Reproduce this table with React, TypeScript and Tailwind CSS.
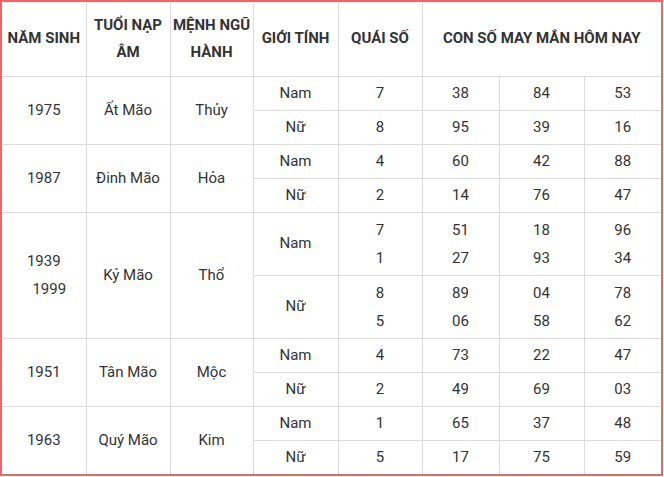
import React from 'react';

type Sub = { gender: string; quai: string[]; nums: string[][] };
type Group = { years: React.ReactNode; tuoi: string; menh: string; tall?: boolean; subs: Sub[] };

const groups: Group[] = [
  {
    years: '1975',
    tuoi: 'Ất Mão',
    menh: 'Thủy',
    subs: [
      { gender: 'Nam', quai: ['7'], nums: [['38', '84', '53']] },
      { gender: 'Nữ', quai: ['8'], nums: [['95', '39', '16']] },
    ],
  },
  {
    years: '1987',
    tuoi: 'Đinh Mão',
    menh: 'Hỏa',
    subs: [
      { gender: 'Nam', quai: ['4'], nums: [['60', '42', '88']] },
      { gender: 'Nữ', quai: ['2'], nums: [['14', '76', '47']] },
    ],
  },
  {
    years: (
      <>
        <div>1939</div>
        <div className="pl-[11px]">1999</div>
      </>
    ),
    tuoi: 'Kỷ Mão',
    menh: 'Thổ',
    tall: true,
    subs: [
      { gender: 'Nam', quai: ['7', '1'], nums: [['51', '18', '96'], ['27', '93', '34']] },
      { gender: 'Nữ', quai: ['8', '5'], nums: [['89', '04', '78'], ['06', '58', '62']] },
    ],
  },
  {
    years: '1951',
    tuoi: 'Tân Mão',
    menh: 'Mộc',
    subs: [
      { gender: 'Nam', quai: ['4'], nums: [['73', '22', '47']] },
      { gender: 'Nữ', quai: ['2'], nums: [['49', '69', '03']] },
    ],
  },
  {
    years: '1963',
    tuoi: 'Quý Mão',
    menh: 'Kim',
    subs: [
      { gender: 'Nam', quai: ['1'], nums: [['65', '37', '48']] },
      { gender: 'Nữ', quai: ['5'], nums: [['17', '75', '59']] },
    ],
  },
];

const td = 'border border-[#dcdcdc] text-center align-middle p-0';

function Lines({ items }: { items: string[] }) {
  return (
    <>
      {items.map((t, i) => (
        <div key={i} className="leading-[28px]">
          {t}
        </div>
      ))}
    </>
  );
}

export default function App() {
  return (
    <div className="bg-white w-[664px] h-[477px]">
      <div
        className="w-[663px] border-2 border-[#e26a6a] text-[#333] text-[15px]"
        style={{ fontFamily: 'Roboto, "Liberation Sans", sans-serif' }}
      >
        <table className="w-full table-fixed border-collapse border-hidden">
          <colgroup>
            <col className="w-[84px]" />
            <col className="w-[84px]" />
            <col className="w-[83px]" />
            <col className="w-[85px]" />
            <col className="w-[84px]" />
            <col className="w-[77px]" />
            <col className="w-[85px]" />
            <col className="w-[77px]" />
          </colgroup>
          <thead>
            <tr className="h-[74px] font-bold leading-[27px]">
              <th className={td}>NĂM SINH</th>
              <th className={td}>
                TUỔI NẠP
                <br />
                ÂM
              </th>
              <th className={td}>
                MỆNH NGŨ
                <br />
                HÀNH
              </th>
              <th className={td}>GIỚI TÍNH</th>
              <th className={td}>QUÁI SỐ</th>
              <th className={td} colSpan={3}>
                CON SỐ MAY MẮN HÔM NAY
              </th>
            </tr>
          </thead>
          <tbody>
            {groups.map((g, gi) =>
              g.subs.map((s, si) => (
                <tr key={`${gi}-${si}`} className={g.tall ? 'h-[63px]' : 'h-[34px]'}>
                  {si === 0 && (
                    <>
                      <td className={td} rowSpan={2}>
                        <div className="leading-[28px]">{g.years}</div>
                      </td>
                      <td className={td} rowSpan={2}>
                        {g.tuoi}
                      </td>
                      <td className={td} rowSpan={2}>
                        {g.menh}
                      </td>
                    </>
                  )}
                  <td className={td}>{s.gender}</td>
                  <td className={td}>
                    <Lines items={s.quai} />
                  </td>
                  {[0, 1, 2].map((c) => (
                    <td key={c} className={td}>
                      <Lines items={s.nums.map((r) => r[c])} />
                    </td>
                  ))}
                </tr>
              ))
            )}
          </tbody>
        </table>
      </div>
    </div>
  );
}
